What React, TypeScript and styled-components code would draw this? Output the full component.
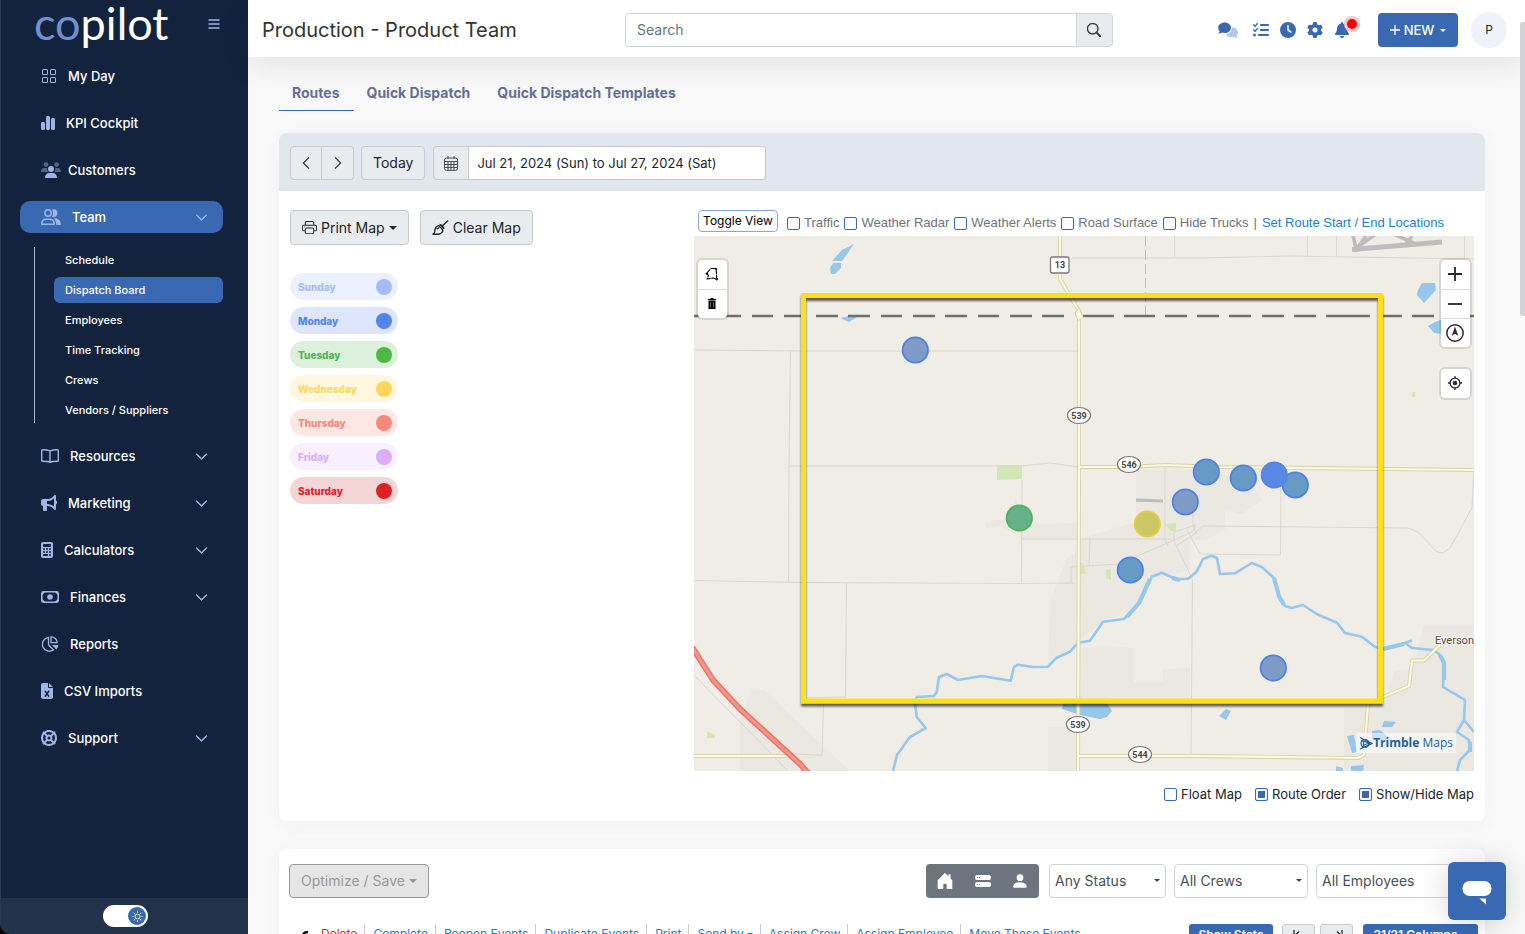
import React from "react";
import styled, { createGlobalStyle } from "styled-components";
import {
  FaBell,
  FaBullhorn,
  FaCalculator,
  FaChartSimple,
  FaClock,
  FaFileExcel,
  FaGear,
  FaLifeRing,
  FaListCheck,
} from "react-icons/fa6";
import {
  BsChevronDown,
  BsChevronLeft,
  BsChevronRight,
  BsGrid,
  BsHddStackFill,
  BsHouseDoorFill,
  BsList,
  BsPersonFill,
  BsPrinter,
  BsSearch,
  BsSun,
} from "react-icons/bs";

const color = {
  navy: "#14233d",
  blue: "#3a69b4",
  icon: "#9db6e3",
  link: "#1c7fc9",
  grey: "#e9ecef",
  border: "#ced4da",
  text: "#212529",
};

const GlobalStyle = createGlobalStyle`
  *, *::before, *::after { box-sizing: border-box; }
  html, body, #root { height: 100%; }
  body {
    margin: 0;
    background: #000;
    color: ${color.text};
    font-family: Inter, "Liberation Sans", sans-serif;
    font-size: 14px;
    line-height: 20px;
    overflow: hidden;
  }
  button, input, select { font: inherit; color: inherit; margin: 0; }
  button { cursor: pointer; padding: 0; }
  a { text-decoration: none; }
  ul { list-style: none; margin: 0; padding: 0; }
  svg { display: block; flex: none; }
`;

const Shell = styled.div`
  display: grid;
  grid-template-columns: 248px minmax(0, 1fr);
  height: 100vh;
`;

/* ---------- Sidebar ---------- */

const Sidebar = styled.aside`
  display: flex;
  flex-direction: column;
  background: ${color.navy};
  border-left: 1px solid #2b3a54;
  border-bottom-left-radius: 10px;
  overflow: hidden;
`;

const Brand = styled.div`
  display: flex;
  justify-content: space-between;
  align-items: flex-start;
  height: 60px;
  padding: 0 26px 0 33px;
`;

const Logo = styled.a`
  font-family: Lato, sans-serif;
  font-size: 45px;
  line-height: 46px;
  color: #fff;
  span { color: #7090cf; }
`;

const MenuButton = styled.button`
  margin-top: 16px;
  border: 0;
  background: none;
  color: ${color.icon};
`;

const Nav = styled.nav`
  flex: 1;
  padding: 0 25px 0 19px;
`;

const NavList = styled.ul`
  display: flex;
  flex-direction: column;
  gap: 15px;
`;

const NavLink = styled.a<{ $active?: boolean; $gap?: number }>`
  display: flex;
  align-items: center;
  gap: ${(p) => p.$gap ?? 11}px;
  height: 32px;
  padding: 0 15px 0 21px;
  border-radius: 10px;
  background: ${(p) => (p.$active ? color.blue : "transparent")};
  color: #fff;
  font-size: 13px;
  font-weight: 500;
  > svg:last-child { margin-left: auto; }
`;

const IconSlot = styled.span<{ $w: number }>`
  flex: none;
  color: ${color.icon};
  svg { width: ${(p) => p.$w}px; }
`;

const SubList = styled.ul`
  display: flex;
  flex-direction: column;
  gap: 4px;
  margin: 14px 0 2px 14px;
  padding-left: 19px;
  border-left: 1px solid ${color.icon};
`;

const SubLink = styled.a<{ $active?: boolean }>`
  display: block;
  padding: 0 11px;
  border-radius: 6px;
  background: ${(p) => (p.$active ? color.blue : "transparent")};
  color: #fff;
  font-size: 11px;
  font-weight: 500;
  line-height: 26px;
`;

const ThemeBar = styled.div`
  display: flex;
  justify-content: center;
  align-items: center;
  height: 36px;
  padding-left: 2px;
  background: #23324b;
`;

const Switch = styled.label`
  position: relative;
  display: block;
  width: 45px;
  height: 22px;
  input {
    appearance: none;
    display: block;
    width: 45px;
    height: 22px;
    border-radius: 11px;
    background: #fff;
  }
  span {
    position: absolute;
    top: 2px;
    right: 2px;
    display: grid;
    place-items: center;
    width: 18px;
    height: 18px;
    border-radius: 50%;
    background: ${color.blue};
    color: #fff;
  }
`;

/* ---------- Top bar ---------- */

const Main = styled.div`
  position: relative;
  display: flex;
  flex-direction: column;
  min-width: 0;
  min-height: 0;
  background: #f9f9f9;
`;

const TopBar = styled.header`
  position: relative;
  z-index: 1;
  display: grid;
  grid-template-columns: minmax(0, 363px) minmax(0, 488px) 1fr;
  align-items: center;
  height: 57px;
  flex: none;
  padding: 3px 18px 0 14px;
  background: #fff;
  box-shadow: 0 10px 30px rgba(30, 32, 37, 0.09);
`;

const Title = styled.h1`
  margin: 0;
  font-size: 20px;
  font-weight: 400;
  line-height: 30px;
  color: #333;
`;

const SearchForm = styled.form`
  display: flex;
  height: 34px;
  input {
    flex: 1;
    min-width: 0;
    padding: 0 11px;
    border: 1px solid ${color.border};
    border-right: 0;
    border-radius: 4px 0 0 4px;
    background: #fff;
  }
  input::placeholder { color: #6c757d; opacity: 1; }
  button {
    display: grid;
    place-items: center;
    width: 37px;
    padding-right: 2px;
    border: 1px solid ${color.border};
    border-radius: 0 4px 4px 0;
    background: ${color.grey};
    color: #333;
  }
`;

const Actions = styled.div`
  display: flex;
  align-items: center;
  justify-content: flex-end;
`;

const IconRow = styled.div`
  display: flex;
  align-items: center;
  gap: 11px;
  margin-right: 28px;
`;

const IconButton = styled.button<{ $space?: boolean }>`
  position: relative;
  border: 0;
  background: none;
  color: ${color.blue};
  margin-right: ${(p) => (p.$space ? 4 : 0)}px;
`;

const AlertDot = styled.span`
  position: absolute;
  top: -6px;
  right: -10px;
  width: 16px;
  height: 16px;
  border: 3px solid #fcc6c8;
  border-radius: 50%;
  background: #f90006;
`;

const Caret = styled.span<{ $size?: number }>`
  flex: none;
  border: ${(p) => p.$size ?? 4}px solid transparent;
  border-top-color: currentColor;
  border-bottom: 0;
`;

const NewButton = styled.button`
  display: flex;
  align-items: center;
  justify-content: center;
  gap: 4px;
  width: 80px;
  height: 34px;
  border: 0;
  border-radius: 4px;
  background: ${color.blue};
  color: #fff;
  font-size: 13px;
  font-weight: 500;
  ${Caret} { margin-left: 2px; }
`;

const Avatar = styled.button`
  width: 36px;
  height: 36px;
  margin-left: 13px;
  border: 0;
  border-radius: 50%;
  background: #eff2f9;
  font-size: 12px;
`;

/* ---------- Page ---------- */

const Page = styled.main`
  flex: 1;
  min-height: 0;
  overflow: hidden;
  padding: 18px 40px 0 31px;
`;

const ScrollThumb = styled.div`
  position: absolute;
  z-index: 2;
  top: 22px;
  right: 0;
  width: 5px;
  height: 294px;
  border-radius: 3px 0 0 3px;
  background: #d3d3d5;
`;

const Tabs = styled.nav`
  display: flex;
  margin-bottom: 22px;
`;

const Tab = styled.a<{ $active?: boolean }>`
  padding: 0 14px 0 13px;
  border-bottom: 1px solid ${(p) => (p.$active ? color.blue : "transparent")};
  color: #676f91;
  font-size: 14px;
  font-weight: 700;
  line-height: 35px;
`;

const Card = styled.section`
  margin-bottom: 28px;
  border-radius: 8px;
  background: #fff;
  box-shadow: 0 4px 24px rgba(30, 32, 37, 0.04);
  overflow: hidden;
`;

const DateBar = styled.div`
  display: flex;
  align-items: center;
  gap: 7px;
  height: 58px;
  padding: 2px 11px 0;
  background: #e1e6ef;
`;

const Button = styled.button<{ $h?: number; $disabled?: boolean }>`
  display: flex;
  align-items: center;
  gap: 4px;
  height: ${(p) => p.$h ?? 34}px;
  padding: 0 11px;
  border: 1px solid ${(p) => (p.$disabled ? "#999" : "#c8cacc")};
  border-radius: 4px;
  background: ${(p) => (p.$disabled ? "#e5e5e5" : color.grey)};
  color: ${(p) => (p.$disabled ? "#999" : color.text)};
  white-space: nowrap;
`;

const Pager = styled.div`
  display: flex;
  button { width: 32px; justify-content: center; padding: 0; }
  button:first-child { border-radius: 4px 0 0 4px; }
  button:last-child { border-left: 0; border-radius: 0 4px 4px 0; }
`;

const DateField = styled.label`
  display: flex;
  width: 333px;
  height: 34px;
  margin-left: 1px;
  span {
    display: grid;
    place-items: center;
    width: 36px;
    border: 1px solid #c8cacc;
    border-radius: 4px 0 0 4px;
    background: ${color.grey};
  }
  input {
    flex: 1;
    min-width: 0;
    padding: 0 8px 1px;
    border: 1px solid #c8cacc;
    border-left: 0;
    border-radius: 0 4px 4px 0;
    background: #fff;
    font-size: 13px;
  }
`;

const MapBody = styled.div`
  display: grid;
  grid-template-columns: 404px minmax(0, 1fr);
  padding: 19px 11px 17px;
`;

const ButtonRow = styled.div`
  display: flex;
  gap: 11px;
`;

const DayList = styled.ul`
  display: flex;
  flex-direction: column;
  gap: 7px;
  margin-top: 28px;
`;

const DayButton = styled.button<{ $fg: string; $bg: string }>`
  display: flex;
  align-items: center;
  justify-content: space-between;
  width: 108px;
  height: 27px;
  padding: 0 6px 0 8px;
  border: 0;
  border-radius: 14px;
  background: ${(p) => p.$bg};
  color: ${(p) => p.$fg};
  font-size: 10px;
  font-weight: 800;
  &::after {
    content: "";
    width: 16px;
    height: 16px;
    border-radius: 50%;
    background: currentColor;
  }
`;

const LayerBar = styled.div`
  display: flex;
  align-items: center;
  gap: 7px;
  height: 26px;
  padding: 0 4px 4px;
  color: #6c757d;
  font-family: "Liberation Sans", Arial, sans-serif;
  font-size: 13px;
  white-space: nowrap;
  a { color: ${color.link}; }
`;

const ToggleButton = styled.button`
  width: 80px;
  height: 22px;
  margin-right: 2px;
  border: 1px solid #8aa6d6;
  border-radius: 4px;
  background: #fff;
  color: #000;
  font-family: Inter, sans-serif;
  font-size: 12px;
`;

const CheckLabel = styled.label`
  display: flex;
  align-items: center;
  gap: 4px;
  input {
    appearance: none;
    width: 13px;
    height: 13px;
    border: 1px solid ${color.blue};
    border-radius: 2px;
    background: #fff;
  }
  input:checked {
    background: ${color.blue};
    box-shadow: inset 0 0 0 2px #fff;
  }
`;

const LayerChecks = styled.div`
  display: flex;
  gap: 5px;
  padding-top: 4px;
`;

const MapOptions = styled.div`
  display: flex;
  justify-content: flex-end;
  gap: 13px;
  margin-top: 13px;
  font-size: 13px;
`;

const MapFrame = styled.div`
  position: relative;
  height: 535px;
  overflow: hidden;
  background: #f0ede6;
  > svg { width: 100%; height: 100%; }
`;

const MapControls = styled.div<{ $side: "left" | "right"; $top: number }>`
  position: absolute;
  top: ${(p) => p.$top}px;
  ${(p) => p.$side}: 4px;
  border-radius: 4px;
  background: #fff;
  box-shadow: 0 0 0 2px rgba(0, 0, 0, 0.1);
  button {
    display: grid;
    place-items: center;
    width: 29px;
    height: 29px;
    padding: 0 1px 1px 0;
    border: 0;
    background: none;
  }
  button + button { border-top: 1px solid #ddd; }
`;

const Attribution = styled.div`
  position: absolute;
  right: 18px;
  bottom: 18px;
  display: flex;
  align-items: center;
  height: 20px;
  padding: 0 3px;
  background: rgba(255, 255, 255, 0.5);
  color: #1d5f9e;
  font-family: "Open Sans", sans-serif;
  font-size: 12px;
  line-height: 18px;
  white-space: pre;
`;

const BoardTop = styled.div`
  display: flex;
  align-items: center;
  gap: 8px;
  padding: 15px 11px 0 10px;
  > :first-child { margin-right: auto; }
`;

const ViewGroup = styled.div`
  display: flex;
  width: 113px;
  height: 34px;
  margin-right: 2px;
  border-radius: 4px;
  background: #6c757d;
  button {
    flex: 1;
    display: grid;
    place-items: center;
    border: 0;
    background: none;
    color: #fff;
  }
`;

const SelectBox = styled.label<{ $w: number }>`
  position: relative;
  width: ${(p) => p.$w}px;
  select {
    appearance: none;
    display: block;
    width: 100%;
    height: 34px;
    padding: 0 5px;
    border: 1px solid ${color.border};
    border-radius: 4px;
    background: #fff;
    color: #495057;
  }
  span {
    position: absolute;
    right: 6px;
    top: 15px;
    color: #444;
  }
`;

const BulkBar = styled.div`
  display: flex;
  align-items: flex-start;
  height: 40px;
  margin-top: 26px;
  padding: 0 7px 0 20px;
  font-size: 12px;
`;

const BulkLinks = styled.ul`
  display: flex;
  margin: 0 auto 0 0;
  white-space: nowrap;
  li { padding: 0 7px 0 8px; }
  li + li { border-left: 1px solid #ccc; }
`;

const BulkLink = styled.a<{ $danger?: boolean }>`
  display: flex;
  align-items: center;
  gap: 3px;
  color: ${(p) => (p.$danger ? "#e02b2b" : color.link)};
`;

const SmallButton = styled.button<{ $w: number; $primary?: boolean }>`
  display: flex;
  align-items: center;
  justify-content: center;
  gap: 4px;
  width: ${(p) => p.$w}px;
  height: 22px;
  border: ${(p) => (p.$primary ? "0" : "1px solid #c8cacc")};
  border-radius: 3px;
  background: ${(p) => (p.$primary ? color.blue : color.grey)};
  color: ${(p) => (p.$primary ? "#fff" : color.text)};
  font-weight: 600;
`;

const SmallButtons = styled.div`
  display: flex;
  gap: 5px;
  > :first-child { margin-right: 4px; }
  > :last-child { margin-left: 5px; }
`;

const ChatButton = styled.button`
  position: absolute;
  right: 19px;
  bottom: 14px;
  z-index: 3;
  display: grid;
  place-items: center;
  width: 58px;
  height: 58px;
  padding-top: 3px;
  border: 0;
  border-radius: 6px;
  background: ${color.blue};
  box-shadow: 0 2px 30px rgba(0, 0, 0, 0.16);
`;

/* ---------- Icons ---------- */

const UsersIcon = () => (
  <svg width="20" height="16" viewBox="0 0 20 16" fill="currentColor">
    <g opacity="0.45">
      <circle cx="5" cy="2.6" r="2.4" />
      <circle cx="15.6" cy="2.6" r="2.4" />
      <path d="M0 10c0-2.400 1.300-4 3.200-4h3.100c-.4 1.500 0 2.800 1 4z" />
      <path d="M20 10c0-2.400-1.300-4-3.200-4h-2.600c.4 1.500 0 2.800-1 4z" />
    </g>
    <circle cx="10" cy="7" r="3" />
    <path d="M4 16c0-3 1.700-5 4.200-5h3.600c2.500 0 4.200 2 4.200 5z" />
  </svg>
);

const TeamIcon = () => (
  <svg width="20" height="16" viewBox="0 0 20 16">
    <path
      d="M7 .8a3.200 3.200 0 1 1 0 6.400a3.200 3.200 0 0 1 0-6.400zM.8 15.200c0-3.200 2-5 4.400-5h3.600c2.400 0 4.400 1.800 4.400 5z"
      fill="none"
      stroke="currentColor"
      strokeWidth="1.500"
    />
    <path
      d="M11 .4a4 4 0 1 1 0 7.400c1.300-2 1.300-5.400 0-7.400zM12.300 9.400h2.200c3 0 5.500 2.600 5.500 6.600h-4.800c.2-2.800-.9-5.200-2.900-6.600z"
      fill="currentColor"
    />
  </svg>
);

const BookIcon = () => (
  <svg width="18" height="14" viewBox="0 0 18 14" fill="none" stroke="currentColor" strokeWidth="1.400">
    <path d="M9 2C7.300 1 4.500.7 1.600.7a.9.9 0 0 0-.9.900v9.800c0 .5.400.9.900.9 2.900 0 5.700.1 7.400 1 1.700-.9 4.500-1 7.400-1 .5 0 .9-.4.900-.9V1.600a.9.900 0 0 0-.9-.9C13.500.7 10.700 1 9 2zM9 2v11.300" />
  </svg>
);

const MoneyIcon = () => (
  <svg width="18" height="12" viewBox="0 0 18 12">
    <rect x="0.800" y="0.800" width="16.400" height="10.400" rx="1.600" fill="none" stroke="currentColor" strokeWidth="1.600" />
    <circle cx="9" cy="6" r="2.800" fill="currentColor" />
    <path d="M1 1h3.200L1 4.200zM17 1v3.200L13.800 1zM1 11V7.800L4.200 11zM17 11h-3.200L17 7.800z" fill="currentColor" />
  </svg>
);

const PieIcon = () => (
  <svg width="18" height="16" viewBox="0 0 18 16" fill="none" stroke="currentColor" strokeWidth="1.300">
    <path d="M10 .8v5.900h6.200A6 6 0 0 0 10 .8z" />
    <path d="M7.500 1.300A7 7 0 1 0 12.400 14L7.500 8.700z" />
    <path d="M11 9h6.400a7 7 0 0 1-2 4.400z" fill="currentColor" stroke="none" />
  </svg>
);

const CommentsIcon = () => (
  <svg width="20" height="17" viewBox="0 0 20 17" fill="currentColor">
    <path
      d="M13.800 5.200c3.500.1 6.200 2.300 6.200 5.200 0 1.300-.5 2.400-1.400 3.300.2.900.7 1.700 1.400 2.300-1.300.1-2.500-.3-3.600-1-3.800 1-7.500-.4-8.600-3.300 3.600 0 6.300-2.600 6-6.500z"
      opacity="0.380"
    />
    <path d="M6.600.4c3.600 0 6.400 2.300 6.400 5.300S10.200 11 6.600 11c-.9 0-1.800-.1-2.600-.4-1 .7-2.300 1.200-3.800 1.100.7-.7 1.200-1.500 1.400-2.400C.7 8.300.2 7.100.2 5.700.2 2.700 3 .4 6.600.4z" />
  </svg>
);

const CalendarIcon = () => (
  <svg width="14" height="15" viewBox="0 0 14 15" fill="none" stroke="#495057" strokeWidth="1">
    <rect x="0.500" y="2" width="13" height="12.400" rx="2" />
    <path d="M.5 5.500h13M.5 8.500h13M.5 11.500h13M4 5.500v9M7 5.500v9M10 5.500v9M4 0v3M10 0v3" />
  </svg>
);

const BroomIcon = () => (
  <svg width="17" height="15" viewBox="0 0 17 15" fill="none" stroke="currentColor" strokeWidth="1.400" strokeLinejoin="round">
    <path d="M16.200.6 9.600 6.600M6.600 5.600l4 3.900c.6 2-.9 4.300-3.600 4.700-2 .2-4.200.1-6 0 1.300-.7 1.900-1.800 1.900-3.400C2.900 8.200 4.300 6.100 6.600 5.600zM4.600 9.200c.7-1 1.300-1.200 2.600-1.200" />
    <path d="M7.600 4.600c1.500 0 4 2.400 4.200 4.200" strokeWidth="1.800" />
  </svg>
);

const LassoIcon = () => (
  <svg width="14" height="14" viewBox="0 0 14 14" fill="none" stroke="#000">
    <path d="M6 1.500h5.200l.6 10.800L8 11 2 12l1.600-3.600L1.500 6.500z" strokeWidth="1.100" strokeLinejoin="round" strokeDasharray="5 0.600" />
    <circle cx="11.800" cy="12.200" r="0.900" />
    <circle cx="11" cy="1.800" r="0.700" />
    <circle cx="1.800" cy="6.600" r="0.700" />
  </svg>
);

const TrashIcon = () => (
  <svg width="8" height="11" viewBox="0 0 8 11">
    <path d="M0 1h2.500V0h3v1H8v1H0zM.5 2.500h7V11h-7z" />
    <path d="M2.500 4v5.500M5.500 4v5.500" stroke="#888" strokeWidth=".7" />
  </svg>
);

const PlusIcon = ({ size = 14 }: { size?: number }) => (
  <svg width={size} height={size} viewBox="0 0 14 14" stroke="currentColor" strokeWidth="1.800">
    <path d="M7 0v14M0 7h14" />
  </svg>
);

const MinusIcon = () => (
  <svg width="14" height="14" viewBox="0 0 14 14" stroke="currentColor" strokeWidth="1.800">
    <path d="M0 7h14" />
  </svg>
);

const CompassIcon = () => (
  <svg width="18" height="18" viewBox="0 0 18 18">
    <circle cx="9" cy="9" r="8.200" fill="none" stroke="#2d2a3a" strokeWidth="1.500" />
    <path d="M9 2.500 12.300 12 9 9.800 5.700 12z" fill="#2d2a3a" />
  </svg>
);

const LocateIcon = () => (
  <svg width="14" height="14" viewBox="0 0 14 14" fill="none" stroke="#2d2a3a" strokeWidth="1.300">
    <circle cx="7" cy="7" r="4.900" />
    <circle cx="7" cy="7" r="2.300" fill="#2d2a3a" stroke="none" />
    <path d="M7 0v2.500M7 11.500V14M0 7h2.500M11.500 7H14" />
  </svg>
);

const ChatIcon = () => (
  <svg width="30" height="24" viewBox="0 0 30 24" fill="#fff">
    <rect x="0.500" y="0" width="29" height="15" rx="7.200" />
    <path d="M17.500 17.500h6.500v6z" />
  </svg>
);

const TrimbleMark = () => (
  <svg width="14" height="14" viewBox="0 0 14 14" fill="none" stroke="#1d5f9e" strokeWidth="1.200">
    <circle cx="6" cy="7.500" r="4" />
    <path d="M1 1.500 13 7.500 1 13M2 4.500c3 1 6 1.200 9 3M3 11c2-2.500 4-3.500 8-3.500M4.500 4.500v6" />
  </svg>
);

const ReturnArrow = () => (
  <svg width="14" height="20" viewBox="0 0 14 20" fill="none" stroke="#111" strokeWidth="2.400">
    <path d="M9 8C5 8 3.500 10 3.500 14v6" />
  </svg>
);

const StepIcon = ({ flip }: { flip?: boolean }) => (
  <svg width="12" height="10" viewBox="0 0 12 10" fill="none" stroke="#212529" strokeWidth="1.300">
    <path d={flip ? "M11 0v10M0 5h9M6 1.500 9.500 5 6 8.500" : "M1 0v10M12 5H3M6 1.500 2.500 5 6 8.500"} />
  </svg>
);

/* ---------- Map drawing ---------- */

const mainRoads = [
  "M1060 236V279L1079 311V470L1078 771",
  "M1079 467L1130 467L1165 465L1220 467L1474 470",
  "M694 756H785L792 752",
  "M1078 756L1200 756L1358 758L1364 755L1368 704L1383 697L1409 686L1412 660.500H1424L1440 645",
];

const minorRoads = [
  "M694 350L801 351H1078",
  "M790.500 350L789 465L788.500 582",
  "M789 466H1022L1050 463L1079 467",
  "M694 580.500L801 582.500L1021 583.500L1075 583",
  "M1022 480L1021.500 583",
  "M1021.500 539H1078H1172",
  "M846.500 583L845.500 697L801 698",
  "M823.500 703L822 755.500L790 753.500",
  "M1072 258L1200 258L1290 256L1474 259",
  "M1174.500 236V257M1307.500 236V256M1336.500 236V257M1464.500 236V259",
  "M1281 480L1280.500 555L1200 554L1187 530",
  "M1165 467V540L1168 546M1193 500V525L1196 533L1176 546",
  "M1090 539L1089 567M1071 583V567L1120 564L1192 532L1196 525L1174 532V541L1192 578L1192.500 582L1191 753",
];

const river =
  "M893 771L897 755L910 737L925.700 728L916.700 717L915 704L916.700 697L934 696L936.700 692L939 677L946.700 674L958 680L981.700 676L1010.700 680.700L1014 667L1018 664.700L1033 667L1048 666.700L1056.700 657.700L1070 651.700L1078 642.700L1090 640.700L1103 621.700L1124 619L1139 603L1151.700 576.700L1161.700 572.700L1176.700 579.300L1188 578.700L1196.700 571.700L1203 559L1211.700 555.700L1217 558L1220 574L1235 573.300L1251.700 563L1261.700 567L1274 578L1279 596L1285 606L1291.700 608L1303 605L1316.700 614L1337 622.700L1345 633L1361.700 636.700L1375 646.700L1381.700 648.700L1405 643L1412 648L1433 650L1439 654L1444 663L1443 687L1465 700L1464 720L1457 732L1469 740L1470 750L1460 760L1457 771M1464 720L1474 732M1405 643L1412 640.500";

const riverWide = "M1127 617L1139 603L1150 579M1274 578L1279 596L1284 605M1172 578L1180 580M1440 655L1444 663L1444 680M1383 649L1404 644M1470 742L1470 752";

const lakes = [
  "854,244 842,250 832,261 842,261",
  "833,263 841,263 841,268 835,274 831,274 830,268",
  "840,318 848,316 857,317 849,322",
  "1418,290 1422,283 1435,283 1436,290 1424,303 1417,295",
  "1428,326 1435,322 1443,319 1443,334 1434,333",
  "1062,709 1063,703 1107,703 1112,711 1107,717 1100,719 1080,715",
  "1219,716 1226,709 1231,711 1226,720",
  "1347,736 1354,735 1357,752 1352,753",
  "1382,727 1384,721 1396,722 1392,727",
  "1351,766 1364,765 1363,771 1351,771",
  "1336,766 1343,768 1343,771 1336,771",
  "1372,731 1380,730 1392,740 1372,740",
];

const urban = [
  "984,523 1010,517 1016,498 1024,524 1078,523 1078,538 1022,538 1000,526 986,528",
  "1067,558 1078,550 1078,643 1056,657 1048,666 1050,602 1054,590",
  "1079,539 1136,522 1136,470 1193,470 1248,478 1262,500 1242,514 1225,510 1225,530 1205,540 1190,540 1190,570 1150,580 1135,610 1105,620 1079,640",
  "1079,648 1105,646 1134,648 1134,682 1163,682 1163,669 1190,668 1190,700 1079,700",
  "1048,727 1079,727 1079,771 1048,771",
  "751,690 764,690 850,771 740,771 740,720",
  "1344,706 1383,706 1395,670 1412,670 1424,625 1474,625 1474,771 1344,771",
];

const parks = [
  "997,465 1022,465 1022,479 997,480",
  "1165,524 1176,523 1176,531 1171,531",
  "1106,570 1111,569 1111,580 1106,578",
];

const fields = [
  "1079,563 1083,563 1086,574 1080,574",
  "707,731 715,735 715,738 707,738",
  "1412,392 1415,392 1415,397 1412,397",
];

const border =
  "M694 316H708M719 316H741M752 316H773M784 316H806M816 316H838M848 316H870M881 316H902M913 316H935M945 316H967M978 316H999M1010 316H1032M1042 316H1064M1083 316H1114M1124 316H1155M1165 316H1187M1197 316H1219M1229 316H1251M1262 316H1284M1294 316H1316M1326 316H1370M1383 316H1402M1412 316H1434M1470 316H1474";

const stops: [number, number, string, string][] = [
  [915, 350, "#7f9cc6", "#4f80ea"],
  [1206, 472, "#669bc6", "#4f80ea"],
  [1243, 478, "#669bc6", "#4f80ea"],
  [1295, 485, "#669bc6", "#4f80ea"],
  [1274, 475, "#5888e2", "#5585ea"],
  [1185, 502, "#7f9cc6", "#4f80ea"],
  [1130, 570, "#669bc6", "#4f80ea"],
  [1273, 668, "#7f9cc6", "#4f80ea"],
  [1019, 518, "#65b18a", "#4eb353"],
  [1147, 524, "#c9c864", "#eacb45"],
];

const shields: [number, number, string][] = [
  [1079, 415, "539"],
  [1129, 464, "546"],
  [1078, 724, "539"],
  [1140, 754, "544"],
];

const RouteMap = () => (
  <svg viewBox="694 236 780 535" preserveAspectRatio="xMidYMid slice" role="img" aria-label="Route map">
    <defs>
      <filter id="boxShadow" x="-5%" y="-5%" width="110%" height="110%">
        <feDropShadow dx="0" dy="3" stdDeviation="0.800" floodColor="#000" floodOpacity="0.620" />
      </filter>
    </defs>
    <g fill="#ebe8e1">
      {urban.map((p) => <polygon key={p} points={p} />)}
    </g>
    <g fill="#d3e7b6">
      {parks.map((p) => <polygon key={p} points={p} />)}
    </g>
    <g fill="#dfe3b4">
      {fields.map((p) => <polygon key={p} points={p} />)}
    </g>
    <g fill="none" stroke="#dad7cc" strokeWidth="1">
      {minorRoads.map((d) => <path key={d} d={d} />)}
      <path d="M694 675L788 771M1195 533L1203 526L1408 528L1418 532L1437 552L1443 553L1450 548L1472 508L1474 470" stroke="#d9d5d6" />
    </g>
    <g fill="none" stroke="#bdbdbd">
      <path d="M1352 249.500L1442 242" strokeWidth="5" />
      <path d="M1353 236L1357 252M1376 234L1355 249M1366 236L1358 247M1393 234L1414 243M1412 236L1406 244" strokeWidth="3.500" />
      <path d="M1136 500L1163 501" strokeWidth="3" />
      <path d="M1145.500 236V315" strokeDasharray="10 4" />
    </g>
    <g fill="#96c7ec">
      {lakes.map((p) => <polygon key={p} points={p} />)}
    </g>
    <g fill="none" stroke="#96c7ec" strokeLinejoin="round">
      <path d={river} strokeWidth="2.600" />
      <path d={riverWide} strokeWidth="4.200" />
    </g>
    <path d={border} stroke="#716d69" strokeWidth="2.600" />
    <g fill="none" strokeLinejoin="round">
      {mainRoads.map((d) => <path key={d} d={d} stroke="#d6d2ab" strokeWidth="4" />)}
      {mainRoads.map((d) => <path key={d} d={d} stroke="#fdfadd" strokeWidth="2.200" />)}
      <path d="M1079 308L1075 313L1078 321L1083 317Z" stroke="#d6d2ab" fill="#fdfadd" />
      <path d="M692 647L713 680L740 709L800 764L808 773" stroke="#ea7468" strokeWidth="6" />
      <path d="M692 647L713 680L740 709L800 764L808 773" stroke="#f2958a" strokeWidth="3" />
    </g>
    <g fontFamily="Roboto, sans-serif" fontSize="9" fontWeight="700" fill="#444" textAnchor="middle">
      <rect x="1050.500" y="257" width="18.500" height="16" rx="2" fill="#fff" stroke="#777" strokeWidth="1.300" />
      <text x="1060" y="268">13</text>
      {shields.map(([x, y, n]) => (
        <g key={`${x}-${y}`}>
          <ellipse cx={x} cy={y + 0.5} rx="11.500" ry="8" fill="#fff" stroke="#777" strokeWidth="1.200" />
          <text x={x} y={y + 4}>{n}</text>
        </g>
      ))}
    </g>
    <text x="1435" y="644" fontFamily="Roboto, sans-serif" fontSize="11" fill="#5f4a4a" stroke="#fff" strokeWidth="2" strokeOpacity=".6" paintOrder="stroke">
      Everson
    </text>
    <rect x="803.500" y="295.500" width="577" height="405.500" fill="none" stroke="#fde019" strokeWidth="5" filter="url(#boxShadow)" />
    {stops.map(([x, y, fill, stroke]) => (
      <circle key={`${x}-${y}`} cx={x + 0.3} cy={y} r="12.700" fill={fill} stroke={stroke} strokeWidth="1.800" />
    ))}
  </svg>
);

/* ---------- Data ---------- */

type NavItem = { label: string; icon: React.ReactNode; w: number; gap?: number; more?: boolean };

const navTop: NavItem[] = [
  { label: "My Day", icon: <BsGrid size={16} />, w: 16 },
  { label: "KPI Cockpit", icon: <FaChartSimple size={16} />, w: 14 },
  { label: "Customers", icon: <UsersIcon />, w: 20, gap: 7 },
];

const navBottom: NavItem[] = [
  { label: "Resources", icon: <BookIcon />, w: 18, more: true },
  { label: "Marketing", icon: <FaBullhorn size={16} />, w: 16, more: true },
  { label: "Calculators", icon: <FaCalculator size={16} />, w: 12, more: true },
  { label: "Finances", icon: <MoneyIcon />, w: 18, more: true },
  { label: "Reports", icon: <PieIcon />, w: 18 },
  { label: "CSV Imports", icon: <FaFileExcel size={16} />, w: 12 },
  { label: "Support", icon: <FaLifeRing size={16} />, w: 16, more: true },
];

const teamLinks = ["Schedule", "Dispatch Board", "Employees", "Time Tracking", "Crews", "Vendors / Suppliers"];

const days: [string, string, string][] = [
  ["Sunday", "#a3bcff", "#ecf1ff"],
  ["Monday", "#5383ee", "#dde6fc"],
  ["Tuesday", "#4fb748", "#dcf0dc"],
  ["Wednesday", "#fbd75b", "#fff7df"],
  ["Thursday", "#f6887b", "#fde7e4"],
  ["Friday", "#dbadff", "#f8efff"],
  ["Saturday", "#dd2127", "#f5d6d7"],
];

const layers = ["Traffic", "Weather Radar", "Weather Alerts", "Road Surface", "Hide Trucks"];

const bulk = [
  "Delete",
  "Complete",
  "Reopen Events",
  "Duplicate Events",
  "Print",
  "Send by",
  "Assign Crew",
  "Assign Employee",
  "Move These Events",
];

const NavRow = ({ item }: { item: NavItem }) => (
  <li>
    <NavLink href="#" $gap={item.gap}>
      <IconSlot $w={item.w}>{item.icon}</IconSlot>
      {item.label}
      {item.more && <BsChevronDown size={13} color={color.icon} strokeWidth={1} />}
    </NavLink>
  </li>
);

export default function App() {
  return (
    <>
      <GlobalStyle />
      <Shell>
        <Sidebar>
          <Brand>
            <Logo href="#"><span>co</span>pilot</Logo>
            <MenuButton aria-label="Collapse menu"><BsList size={16} strokeWidth={0.5} /></MenuButton>
          </Brand>
          <Nav>
            <NavList>
              {navTop.map((item) => <NavRow key={item.label} item={item} />)}
              <li>
                <NavLink href="#" $active>
                  <IconSlot $w={20}><TeamIcon /></IconSlot>
                  Team
                  <BsChevronDown size={13} color={color.icon} strokeWidth={1} />
                </NavLink>
                <SubList>
                  {teamLinks.map((label) => (
                    <li key={label}>
                      <SubLink href="#" $active={label === "Dispatch Board"}>{label}</SubLink>
                    </li>
                  ))}
                </SubList>
              </li>
              {navBottom.map((item) => <NavRow key={item.label} item={item} />)}
            </NavList>
          </Nav>
          <ThemeBar>
            <Switch>
              <input type="checkbox" role="switch" aria-label="Light theme" defaultChecked />
              <span><BsSun size={11} /></span>
            </Switch>
          </ThemeBar>
        </Sidebar>

        <Main>
          <TopBar>
            <Title>Production - Product Team</Title>
            <SearchForm>
              <input type="text" placeholder="Search" aria-label="Search" />
              <button type="button" aria-label="Run search"><BsSearch size={14} strokeWidth={0.5} /></button>
            </SearchForm>
            <Actions>
              <IconRow>
                <IconButton $space aria-label="Messages"><CommentsIcon /></IconButton>
                <IconButton aria-label="Tasks"><FaListCheck size={16} /></IconButton>
                <IconButton aria-label="Time clock"><FaClock size={16} /></IconButton>
                <IconButton aria-label="Settings"><FaGear size={16} /></IconButton>
                <IconButton aria-label="Notifications"><FaBell size={16} /><AlertDot /></IconButton>
              </IconRow>
              <NewButton><PlusIcon size={10} />NEW<Caret $size={3} /></NewButton>
              <Avatar>P</Avatar>
            </Actions>
          </TopBar>
          <ScrollThumb />

          <Page>
            <Tabs>
              <Tab href="#" $active>Routes</Tab>
              <Tab href="#">Quick Dispatch</Tab>
              <Tab href="#">Quick Dispatch Templates</Tab>
            </Tabs>

            <Card>
              <DateBar>
                <Pager>
                  <Button aria-label="Previous week"><BsChevronLeft size={14} strokeWidth={0.5} /></Button>
                  <Button aria-label="Next week"><BsChevronRight size={14} strokeWidth={0.5} /></Button>
                </Pager>
                <Button>Today</Button>
                <DateField>
                  <span><CalendarIcon /></span>
                  <input type="text" aria-label="Date range" defaultValue="Jul 21, 2024 (Sun) to Jul 27, 2024 (Sat)" />
                </DateField>
              </DateBar>
              <MapBody>
                <div>
                  <ButtonRow>
                    <Button $h={35}><BsPrinter size={15} />Print Map<Caret /></Button>
                    <Button $h={35}><BroomIcon />Clear Map</Button>
                  </ButtonRow>
                  <DayList>
                    {days.map(([name, fg, bg]) => (
                      <li key={name}><DayButton $fg={fg} $bg={bg}>{name}</DayButton></li>
                    ))}
                  </DayList>
                </div>
                <div>
                  <LayerBar>
                    <ToggleButton>Toggle View</ToggleButton>
                    <LayerChecks>
                      {layers.map((label) => (
                        <CheckLabel key={label}><input type="checkbox" />{label}</CheckLabel>
                      ))}
                      <span>|</span>
                      <a href="#">Set Route Start / End Locations</a>
                    </LayerChecks>
                  </LayerBar>
                  <MapFrame>
                    <RouteMap />
                    <MapControls $side="left" $top={24}>
                      <button aria-label="Draw area"><LassoIcon /></button>
                      <button aria-label="Delete area"><TrashIcon /></button>
                    </MapControls>
                    <MapControls $side="right" $top={24}>
                      <button aria-label="Zoom in"><PlusIcon /></button>
                      <button aria-label="Zoom out"><MinusIcon /></button>
                      <button aria-label="Reset bearing"><CompassIcon /></button>
                    </MapControls>
                    <MapControls $side="right" $top={133}>
                      <button aria-label="Locate me"><LocateIcon /></button>
                    </MapControls>
                    <Attribution><TrimbleMark /><b>Trimble</b> Maps</Attribution>
                  </MapFrame>
                  <MapOptions>
                    <CheckLabel><input type="checkbox" />Float Map</CheckLabel>
                    <CheckLabel><input type="checkbox" defaultChecked />Route Order</CheckLabel>
                    <CheckLabel><input type="checkbox" defaultChecked />Show/Hide Map</CheckLabel>
                  </MapOptions>
                </div>
              </MapBody>
            </Card>

            <Card>
              <BoardTop>
                <Button $disabled>Optimize / Save<Caret /></Button>
                <ViewGroup>
                  <button aria-label="Property view"><BsHouseDoorFill size={18} /></button>
                  <button aria-label="List view"><BsHddStackFill size={16} /></button>
                  <button aria-label="Employee view"><BsPersonFill size={18} /></button>
                </ViewGroup>
                <SelectBox $w={117}>
                  <select aria-label="Status"><option>Any Status</option></select>
                  <Caret $size={3} />
                </SelectBox>
                <SelectBox $w={134}>
                  <select aria-label="Crew"><option>All Crews</option></select>
                  <Caret $size={3} />
                </SelectBox>
                <SelectBox $w={158}>
                  <select aria-label="Employee"><option>All Employees</option></select>
                  <Caret $size={3} />
                </SelectBox>
              </BoardTop>
              <BulkBar>
                <ReturnArrow />
                <BulkLinks>
                  {bulk.map((label) => (
                    <li key={label}>
                      <BulkLink href="#" $danger={label === "Delete"}>
                        {label}
                        {label === "Send by" && <Caret $size={3} />}
                      </BulkLink>
                    </li>
                  ))}
                </BulkLinks>
                <SmallButtons>
                  <SmallButton $w={84} $primary>Show Stats</SmallButton>
                  <SmallButton $w={33} aria-label="First page"><StepIcon /></SmallButton>
                  <SmallButton $w={33} aria-label="Last page"><StepIcon flip /></SmallButton>
                  <SmallButton $w={115} $primary>21/21 Columns<Caret $size={3} /></SmallButton>
                </SmallButtons>
              </BulkBar>
            </Card>
          </Page>
          <ChatButton aria-label="Open chat"><ChatIcon /></ChatButton>
        </Main>
      </Shell>
    </>
  );
}
